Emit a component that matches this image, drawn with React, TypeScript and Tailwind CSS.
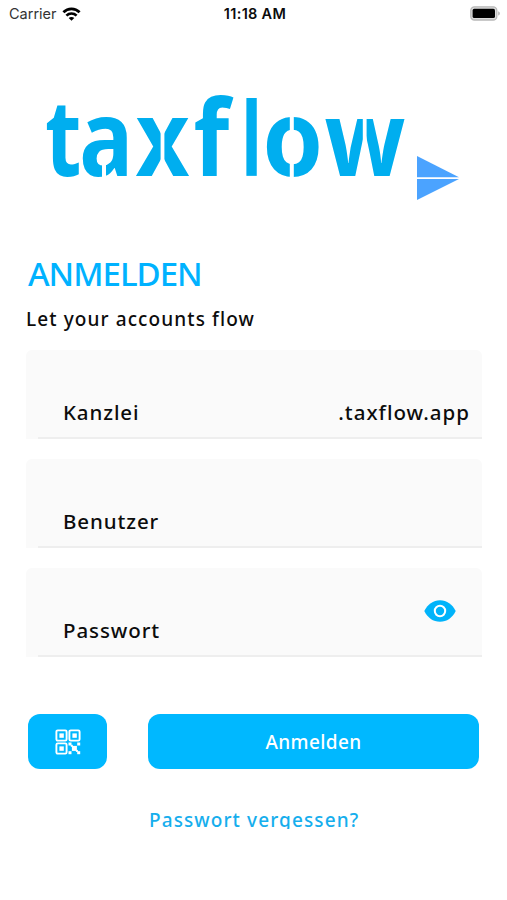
import React from 'react';

const WifiIcon: React.FC = () => (
  <svg width="19" height="14" viewBox="0 0 18 14" fill="none" stroke="#000" strokeWidth="2.7">
    <path d="M0.9 5.3 C5.4 0.7 12.6 0.7 17.1 5.3" />
    <path d="M3.9 8.6 C6.8 5.8 11.2 5.8 14.1 8.6" />
    <path d="M9 13.8 L6.2 11 C7.8 9.6 10.2 9.6 11.8 11 Z" fill="#000" stroke="none" />
  </svg>
);

const BatteryIcon: React.FC = () => (
  <svg width="31" height="15" viewBox="0 0 31 15">
    <rect x="0.8" y="0.8" width="26" height="13.2" rx="3.6" fill="#ddd" stroke="#b8b8b8" strokeWidth="1.3" />
    <rect x="2.6" y="2.8" width="22.4" height="9.2" rx="1.6" fill="#000" />
    <path d="M28.2 5.2 C30.4 6 30.4 8.8 28.2 9.6 Z" fill="#b4b4b4" />
  </svg>
);

const Logo: React.FC = () => (
  <svg width="507" height="192" viewBox="0 28 507 192" role="img" aria-label="taxflow">
    <g fill="#00aeef" className="font-['Open_Sans','Noto_Sans',sans-serif] text-[105px] font-bold">
      <text transform="translate(45 176) scale(.8 1)">t</text>
      <text transform="translate(79 176) scale(.86 1)">a</text>
      <text transform="translate(135.5 176) scale(.89 1)">x</text>
      <text transform="translate(193.5 176) scale(.88 1)">f</text>
      <text transform="translate(241 176) scale(.66 .98)">l</text>
      <text transform="translate(262.5 176) scale(.93 1)">o</text>
      <text transform="translate(324.5 176) scale(.9 1)">w</text>
    </g>
    {/* Stencil gaps */}
    <g fill="#fff">
      <path d="M102 165 H106 V180 H102 Z" />
      <rect x="160.6" y="116" width="3.8" height="62" />
      <rect x="289.8" y="114" width="4" height="18" />
      <rect x="289.8" y="162" width="4" height="18" />
      <rect x="362.8" y="116" width="3.8" height="40" />
    </g>
    <g fill="#4ba3ff">
      <path d="M417 156 L459 177.2 H417 Z" />
      <path d="M417 179 H459 L417 200 Z" />
    </g>
  </svg>
);

const EyeIcon: React.FC = () => (
  <svg width="32" height="22" viewBox="0 0 32 22">
    <path d="M0.3 11 C3.5 4.3 9.2 0.2 16 0.2 S28.5 4.3 31.7 11 C28.5 17.7 22.8 21.8 16 21.8 S3.5 17.7 0.3 11 Z" fill="#00b3fa" />
    <circle cx="16" cy="11" r="5.2" fill="#00b3fa" stroke="#fff" strokeWidth="2" />
  </svg>
);

const QrIcon: React.FC = () => (
  <svg width="26" height="26" viewBox="0 0 26 26" fill="#fff">
    <g fill="none" stroke="#fff" strokeWidth="1.9">
      <rect x="1.4" y="1.4" width="10.2" height="10.2" rx="1.3" />
      <rect x="14.4" y="1.4" width="10.2" height="10.2" rx="1.3" />
      <rect x="1.4" y="14.4" width="10.2" height="10.2" rx="1.3" />
    </g>
    <rect x="4.4" y="4.4" width="4.4" height="4.4" />
    <rect x="17.4" y="4.4" width="4.4" height="4.4" />
    <rect x="4.4" y="17.4" width="4.4" height="4.4" />
    <rect x="13.5" y="13.5" width="3" height="3" />
    <rect x="22.2" y="13.5" width="3" height="3" />
    <rect x="16.9" y="16.9" width="5" height="5" />
    <rect x="13.5" y="22.2" width="3" height="3" />
    <rect x="22.2" y="22.2" width="3" height="3" />
    <rect x="15.8" y="15.8" width="2" height="2" />
    <rect x="20.9" y="20.9" width="2" height="2" />
  </svg>
);

type FieldProps = {
  label: string;
  suffix?: string;
  icon?: React.ReactNode;
};

const Field: React.FC<FieldProps> = ({ label, suffix, icon }) => (
  <div className="h-[89px] w-[456px] rounded-t-md bg-[#fafafa] pl-3">
    <div className="flex h-full justify-between border-b-2 border-[#eeeeee] pl-[25px] pr-3">
      <label className="mt-[47px] text-[20.5px] leading-[30px] tracking-[0.9px]">{label}</label>
      {suffix && <span className="mt-[47px] text-[20.5px] leading-[30px] tracking-[1px]">{suffix}</span>}
      {icon && <button className="mt-[32px] mr-[14px] h-[22px]">{icon}</button>}
    </div>
  </div>
);

const App: React.FC = () => {
  return (
    <div className="h-[900px] w-[507px] overflow-hidden bg-white font-['Noto_Sans','Open_Sans',sans-serif] font-medium text-[#0c0c0c]">
      {/* Status bar */}
      <div className="grid h-[27px] grid-cols-3 items-center pl-[9px] pr-[6px] font-['Inter',sans-serif]">
        <div className="flex items-center gap-[5px] text-[14.5px] font-normal text-[#333]">
          Carrier
          <WifiIcon />
        </div>
        <div className="text-center text-[14.5px] font-semibold tracking-[0.3px]">11:18 AM</div>
        <div className="flex justify-end">
          <BatteryIcon />
        </div>
      </div>

      <div className="mt-px h-[192px]">
        <Logo />
      </div>

      <h1 className="mt-[34px] ml-[28px] h-[40px] text-[33px] leading-[40px] tracking-[-1px] text-[#00b2ff]">ANMELDEN</h1>
      <p className="mt-[11px] ml-[26px] h-[28px] text-[19px] leading-[28px] tracking-[1.1px]">Let your accounts flow</p>

      <div className="mt-[17px] ml-[26px] flex flex-col gap-5">
        <Field label="Kanzlei" suffix=".taxflow.app" />
        <Field label="Benutzer" />
        <Field label="Passwort" icon={<EyeIcon />} />
      </div>

      <div className="mt-[57px] ml-[28px] flex gap-[41px]">
        <button className="flex h-[55px] w-[79px] items-center justify-center rounded-xl bg-[#00b8ff]">
          <QrIcon />
        </button>
        <button className="h-[55px] w-[331px] rounded-xl bg-[#00b8ff] pt-[2px] text-[19px] tracking-[0.4px] text-white">
          Anmelden
        </button>
      </div>

      {/* Line box is shorter than the text, so descenders are clipped */}
      <a className="mt-[36px] ml-[149px] block h-[24px] w-[240px] overflow-hidden whitespace-nowrap text-[19px] leading-[30px] tracking-[1.1px] text-[#16aeed]">
        Passwort vergessen?
      </a>
    </div>
  );
};

export default App;
